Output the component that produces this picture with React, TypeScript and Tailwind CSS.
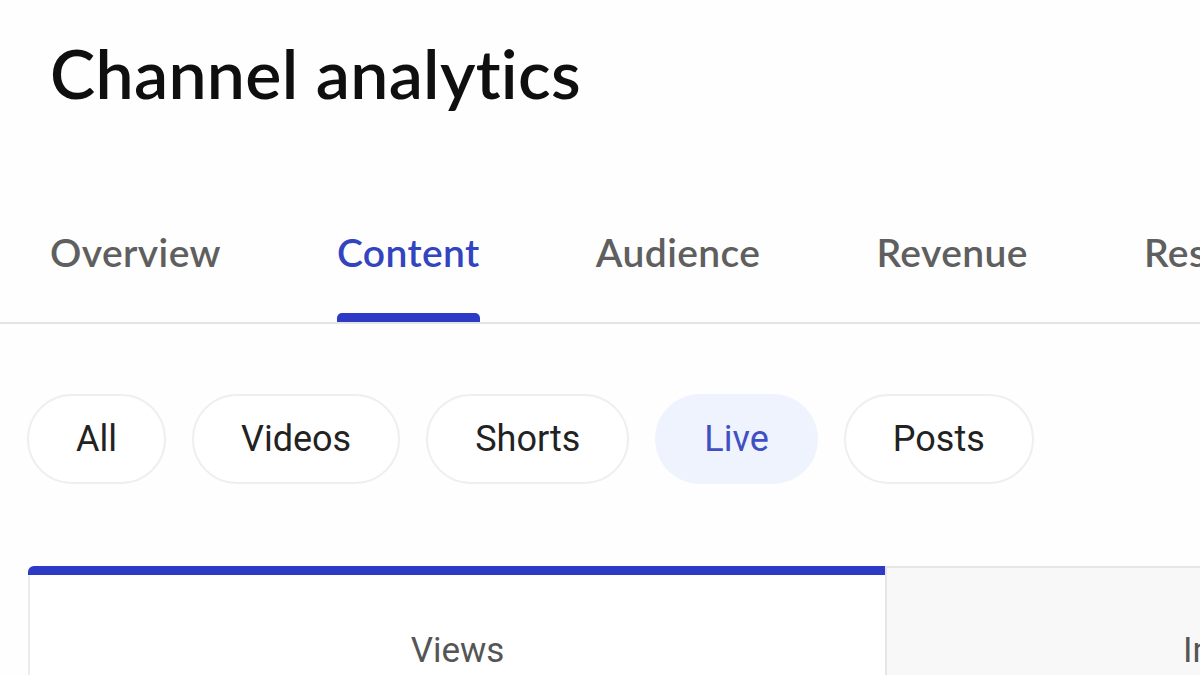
import React from "react";

const tabs = ["Overview", "Content", "Audience", "Revenue", "Research"];
const chips = ["All", "Videos", "Shorts", "Live", "Posts"];

const Tab = ({ label, active }: { label: string; active?: boolean }) => (
  <div className="flex flex-col shrink-0">
    <span
      className={`text-[39px] leading-none font-semibold tracking-[0.4px] ${
        active ? "text-[#3344c0]" : "text-[#5f5f5f]"
      }`}
    >
      {label}
    </span>
    <div className={`mt-[41px] h-[9px] rounded-t-[5px] ${active ? "bg-[#2d3ac6]" : "bg-transparent"}`} />
  </div>
);

const Chip = ({ label, active }: { label: string; active?: boolean }) => (
  <button
    className={`h-[90px] px-[47px] rounded-full text-[36px] leading-none font-['Roboto',sans-serif] ${
      active
        ? "bg-[#eef3fd] text-[#4050c2] border-2 border-transparent"
        : "bg-white text-[#222] border-2 border-[#efefef]"
    }`}
  >
    {label}
  </button>
);

export default function App() {
  return (
    <div className="w-[1200px] h-[675px] overflow-hidden bg-[#fefefe] font-['Lato',sans-serif]">
      <h1 className="pl-[50px] pt-[39px] text-[68px] leading-none font-semibold text-[#0f0f0f] tracking-[0.3px]">
        Channel analytics
      </h1>

      <div className="mt-[126px] flex gap-[116px] pl-[50px] border-b-2 border-[#e4e4e4] whitespace-nowrap">
        {tabs.map((t) => (
          <Tab key={t} label={t} active={t === "Content"} />
        ))}
      </div>

      <div className="mt-[70px] flex gap-[26px] pl-[27px]">
        {chips.map((c) => (
          <Chip key={c} label={c} active={c === "Live"} />
        ))}
      </div>

      <div className="mt-[82px] flex h-[120px] font-['Roboto',sans-serif]">
        <div className="ml-[28px] w-[857px] shrink-0 bg-white border-l-2 border-[#ececec] rounded-tl-[6px] flex flex-col">
          <div className="h-[9px] -ml-[2px] bg-[#2d3ac6] rounded-tl-[6px]" />
          <div className="pt-[58px] text-center text-[35px] leading-none text-[#555]">Views</div>
        </div>
        <div className="flex-1 bg-[#f8f8f8] border-t-2 border-l-2 border-[#e6e6e6] flex flex-col">
          <div className="pt-[65px] pl-[296px] text-[35px] leading-none text-[#555] whitespace-nowrap">
            Impressions
          </div>
        </div>
      </div>
    </div>
  );
}
